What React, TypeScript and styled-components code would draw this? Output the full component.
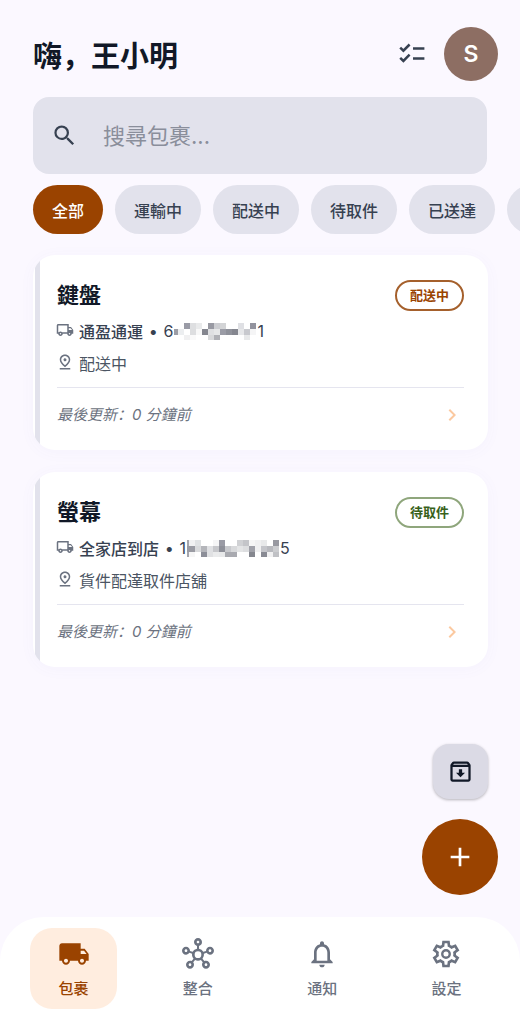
import React, { useState } from 'react';
import styled, { createGlobalStyle } from 'styled-components';
import {
  MdAdd,
  MdChevronRight,
  MdLocalShipping,
  MdNotificationsNone,
  MdOutlineArchive,
  MdOutlineHub,
  MdOutlineLocalShipping,
  MdOutlinePinDrop,
  MdSearch,
} from 'react-icons/md';

const GlobalStyle = createGlobalStyle`
  *, *::before, *::after { box-sizing: border-box; }
  body {
    margin: 0;
    background: #fbf8ff;
    color: #111827;
    font-family: Inter, "Noto Sans CJK SC", sans-serif;
  }
  button, input { font: inherit; color: inherit; }
  button { border: 0; padding: 0; background: none; cursor: pointer; }
`;

const Page = styled.div`
  min-height: 100vh;
  display: flex;
  flex-direction: column;
`;

const Header = styled.header`
  display: flex;
  align-items: center;
  gap: 18px;
  padding: 27px 22px 16px 33px;
`;

const Greeting = styled.h1`
  flex: 1;
  margin: 0;
  padding-top: 6px;
  font-size: 29px;
  line-height: 40px;
  font-weight: 700;
`;

const IconButton = styled.button`
  display: flex;
  color: #374151;
`;

const Avatar = styled.button`
  width: 54px;
  height: 54px;
  border-radius: 50%;
  background: #8d6e63;
  color: #fff;
  font-size: 23px;
  font-weight: 600;
`;

const SearchBox = styled.label`
  display: flex;
  align-items: center;
  gap: 25px;
  height: 77px;
  margin: 0 33px;
  padding: 0 18px;
  border-radius: 16px;
  background: #e2e2ec;
  color: #374151;
`;

const SearchInput = styled.input`
  flex: 1;
  min-width: 0;
  border: 0;
  outline: 0;
  padding: 0;
  background: none;
  font-size: 22px;
  line-height: 32px;
  &::placeholder { color: #8a8e9b; opacity: 1; }
`;

const Chips = styled.div`
  display: flex;
  gap: 12px;
  padding: 11px 0 21px 33px;
  overflow: hidden;
`;

const Chip = styled.button<{ $active: boolean }>`
  flex: none;
  height: 49px;
  padding: 0 19px;
  border-radius: 25px;
  font-size: 16px;
  font-weight: 500;
  background: ${(p) => (p.$active ? '#9a4300' : '#e2e2ec')};
  color: ${(p) => (p.$active ? '#fff' : '#374151')};
`;

const MoreChip = styled(Chip)`
  width: 86px;
`;

const List = styled.main`
  flex: 1;
  display: flex;
  flex-direction: column;
  gap: 22px;
  padding: 0 32px 24px 33px;
`;

const Card = styled.article`
  display: flex;
  padding-left: 2px;
  border-radius: 22px;
  overflow: hidden;
  background: #fff;
  box-shadow: 0 2px 16px rgba(90, 100, 200, 0.04);
`;

const Accent = styled.div`
  width: 5px;
  background: #e2e2ec;
`;

const CardBody = styled.div`
  flex: 1;
  padding: 24px 24px 23px 17px;
`;

const CardTop = styled.div`
  display: flex;
  align-items: center;
  justify-content: space-between;
  height: 32px;
  margin-bottom: 4px;
`;

const CardTitle = styled.h2`
  margin: 0;
  font-size: 22px;
  line-height: 32px;
  font-weight: 700;
`;

const Badge = styled.span<{ $color: string; $line: string }>`
  padding: 0 13px;
  border: 2px solid ${(p) => p.$line};
  border-radius: 16px;
  color: ${(p) => p.$color};
  font-size: 13px;
  line-height: 27px;
  font-weight: 700;
`;

const InfoRow = styled.div<{ $muted?: boolean }>`
  display: flex;
  align-items: center;
  gap: 6px;
  height: 32px;
  font-size: 16px;
  font-weight: ${(p) => (p.$muted ? 400 : 500)};
  color: ${(p) => (p.$muted ? '#4b5563' : '#374151')};
`;

const RowIcon = styled.span`
  display: flex;
  justify-content: center;
  width: 16px;
  padding-bottom: 2px;
  color: #6b7280;
  svg { flex: none; }
`;

const Tracking = styled.span`
  display: flex;
  align-items: center;
  gap: 1px;
  font-weight: 400;
`;

const CardFoot = styled.div`
  display: flex;
  align-items: center;
  justify-content: space-between;
  margin-top: 8px;
  padding-top: 15px;
  border-top: 1px solid #e5e5ef;
  color: #6b7280;
  font-size: 15px;
  line-height: 24px;
  font-style: italic;
`;

const OpenLink = styled.a`
  display: flex;
  color: #fbc9a0;
`;

const Actions = styled.div`
  position: fixed;
  right: 22px;
  bottom: 121px;
  display: flex;
  flex-direction: column;
  align-items: flex-end;
  gap: 20px;
`;

const ArchiveButton = styled.button`
  display: grid;
  place-items: center;
  width: 55px;
  height: 55px;
  margin-right: 10px;
  border-radius: 16px;
  background: #dbdae5;
  box-shadow: 0 1px 3px rgba(0, 0, 0, 0.28);
`;

const AddButton = styled.button`
  display: grid;
  place-items: center;
  width: 76px;
  height: 76px;
  border-radius: 50%;
  background: #9a4300;
  color: #fff;
`;

const TabBar = styled.nav`
  display: flex;
  justify-content: space-between;
  padding: 11px 30px 7px;
  border-radius: 44px 44px 0 0;
  background: #fff;
`;

const Tab = styled.button<{ $active: boolean }>`
  display: flex;
  flex-direction: column;
  align-items: center;
  gap: 7px;
  width: 87px;
  height: 81px;
  padding-top: 10px;
  border-radius: 22px;
  background: ${(p) => (p.$active ? '#ffeddf' : 'none')};
  color: ${(p) => (p.$active ? '#9a4300' : '#6b7280')};
  font-size: 15px;
  line-height: 24px;
  font-weight: 500;
`;

function ChecklistIcon() {
  return (
    <svg width={28} height={28} viewBox="0 0 28 28" fill="none" stroke="currentColor" strokeWidth={2.5}>
      <path d="M2.2 7.6l3.2 3.1 6.2-6.2M2.2 17.8l3.2 3.1 6.2-6.2M15 8.6h11.4M15 18.6h11.4" />
    </svg>
  );
}

function GearIcon({ size }: { size: number }) {
  return (
    <svg width={size} height={size} viewBox="0 0 24 24" fill="currentColor" fillRule="evenodd">
      <path d="M9.25 22l-.4-3.2q-.325-.125-.612-.3t-.563-.375L4.7 19.375l-2.75-4.75l2.575-1.95Q4.5 12.5 4.5 12.338v-.675q0-.163.025-.338L1.95 9.375l2.75-4.75l2.975 1.25q.275-.2.575-.375t.6-.3l.4-3.2h5.5l.4 3.2q.325.125.613.3t.562.375l2.975-1.25l2.75 4.75l-2.575 1.95q.025.175.025.338v.674q0 .163-.05.338l2.575 1.95l-2.75 4.75l-2.95-1.25q-.275.2-.575.375t-.6.3l-.4 3.2zM11 20h1.975l.35-2.65q.775-.2 1.438-.587t1.212-.938l2.475 1.025l.975-1.7l-2.15-1.625q.125-.35.175-.737T17.5 12t-.05-.787t-.175-.738l2.15-1.625l-.975-1.7l-2.475 1.05q-.55-.575-1.212-.962t-1.438-.588L13 4h-1.975l-.35 2.65q-.775.2-1.437.588t-1.213.937L5.55 7.15l-.975 1.7l2.15 1.6q-.125.375-.175.75t-.05.8q0 .4.05.775t.175.75l-2.15 1.625l.975 1.7l2.475-1.05q.55.575 1.213.963t1.437.587z" />
      <circle cx={12} cy={12} r={2.8} fill="none" stroke="currentColor" strokeWidth={1.8} />
    </svg>
  );
}

type Mosaic = { lead: number; rows: string[][] };

const CELL = 6;

/* Pixelated cover over the middle of a tracking number. */
function Redacted({ lead, rows }: Mosaic) {
  const width = lead + (rows[0].length - 1) * CELL;
  return (
    <svg width={width} height={17} role="img" aria-label="已隱藏">
      {rows.map((row, r) =>
        row.map((shade, c) => (
          <rect
            key={`${r}-${c}`}
            x={c === 0 ? 0 : lead + (c - 1) * CELL}
            y={r * CELL}
            width={c === 0 ? lead : CELL}
            height={CELL}
            fill={`#${shade}`}
          />
        )),
      )}
    </svg>
  );
}

const parcels = [
  {
    name: '鍵盤',
    carrier: '通盈通運',
    first: '6',
    last: '1',
    place: '配送中',
    status: '配送中',
    color: '#9a4300',
    line: '#a5602c',
    mosaic: {
      lead: 4,
      rows: [
        'fff fff 9a9ba6 dedfe1 e9eaeb fff 9899a2 cccdd1 d3d4d6 fff fff dfe0e4 fff 92939e'.split(' '),
        '9c9da5 eceef0 fff dddee0 f8f8f8 84868f dfe0e2 e6e7e8 9b9ca6 8f919a 84868f e6e7e9 c8c9ce f5f5f6'.split(' '),
        'fff fff f0f0f1 fafafa fff fff d8d9db b0b1b6 fff fff fff fff e8e9ea fff'.split(' '),
      ],
    },
  },
  {
    name: '螢幕',
    carrier: '全家店到店',
    first: '1',
    last: '5',
    place: '貨件配達取件店舖',
    status: '待取件',
    color: '#38611a',
    line: '#8fa67c',
    mosaic: {
      lead: 2,
      rows: [
        'a5a6ad f1f1f2 e0e2e4 fff fff f5f5f6 9a9ba5 fff fff d0d1d4 c4c5c9 f6f6f6 f0f0f1 e8e9ea fff 9899a1'.split(' '),
        '9a9ba3 9a9ba3 d9dadc b4b5ba dfe0e3 c6c7cb 8e9099 c8c9cd d8d9db e4e5e6 dddee0 a0a1a9 f0f0f1 c4c5ca b8b9be cccdd0'.split(' '),
        'a5a6ad f6f6f6 fff 8c8e98 e0e1e3 eaebec e8e9ea a9aab0 a9aab0 fff fff 85878f fff 888a93 f1f1f2 c0c1c5'.split(' '),
      ],
    },
  },
];

const filters = ['全部', '運輸中', '配送中', '待取件', '已送達'];

const tabs = [
  { label: '包裹', Icon: MdLocalShipping },
  { label: '整合', Icon: MdOutlineHub },
  { label: '通知', Icon: MdNotificationsNone },
  { label: '設定', Icon: GearIcon },
];

export default function App() {
  const [filter, setFilter] = useState('全部');
  const [tab, setTab] = useState('包裹');

  return (
    <Page>
      <GlobalStyle />
      <Header>
        <Greeting>嗨，王小明</Greeting>
        <IconButton aria-label="選取">
          <ChecklistIcon />
        </IconButton>
        <Avatar>S</Avatar>
      </Header>

      <SearchBox>
        <MdSearch size={27} />
        <SearchInput type="text" placeholder="搜尋包裹..." aria-label="搜尋包裹" />
      </SearchBox>

      <Chips>
        {filters.map((f) => (
          <Chip key={f} $active={f === filter} onClick={() => setFilter(f)}>
            {f}
          </Chip>
        ))}
        <MoreChip $active={false} aria-label="更多" />
      </Chips>

      <List>
        {parcels.map((p) => (
          <Card key={p.name}>
            <Accent />
            <CardBody>
              <CardTop>
                <CardTitle>{p.name}</CardTitle>
                <Badge $color={p.color} $line={p.line}>{p.status}</Badge>
              </CardTop>
              <InfoRow>
                <RowIcon><MdOutlineLocalShipping size={18} /></RowIcon>
                <span>{p.carrier}</span>
                <span>•</span>
                <Tracking>
                  {p.first}
                  <Redacted {...p.mosaic} />
                  {p.last}
                </Tracking>
              </InfoRow>
              <InfoRow $muted>
                <RowIcon><MdOutlinePinDrop size={18} /></RowIcon>
                <span>{p.place}</span>
              </InfoRow>
              <CardFoot>
                <span>最後更新：0 分鐘前</span>
                <OpenLink href="#" aria-label={`查看${p.name}`}>
                  <MdChevronRight size={24} />
                </OpenLink>
              </CardFoot>
            </CardBody>
          </Card>
        ))}
      </List>

      <Actions>
        <ArchiveButton aria-label="封存">
          <MdOutlineArchive size={27} />
        </ArchiveButton>
        <AddButton aria-label="新增">
          <MdAdd size={32} />
        </AddButton>
      </Actions>

      <TabBar>
        {tabs.map(({ label, Icon }) => (
          <Tab key={label} $active={label === tab} onClick={() => setTab(label)}>
            <Icon size={32} />
            {label}
          </Tab>
        ))}
      </TabBar>
    </Page>
  );
}
